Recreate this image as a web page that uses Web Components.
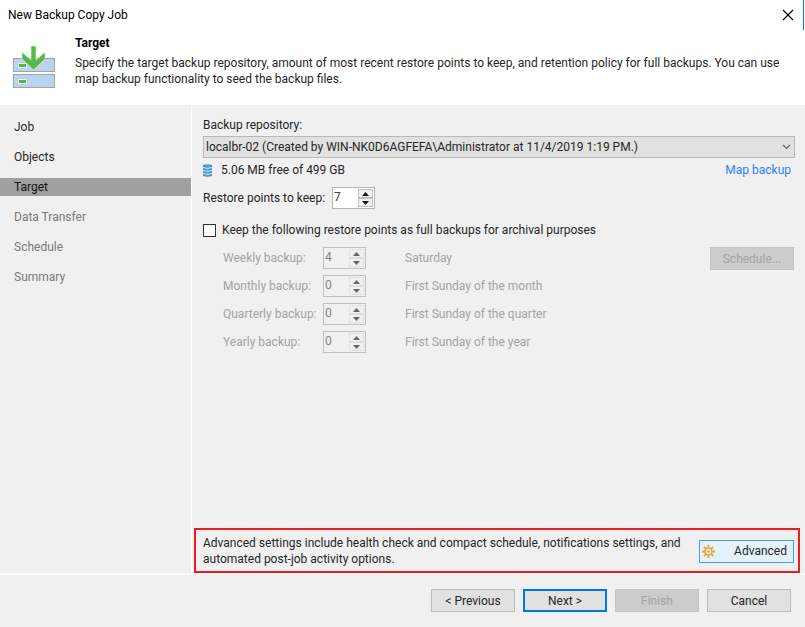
<!DOCTYPE html>
<html lang="en">
<head>
<meta charset="utf-8">
<title>New Backup Copy Job</title>
<style>
  body {
    margin: 0;
    background: #f0f0f0;
    color: #262626;
    font: 12px/16px "Segoe UI", Roboto, "Open Sans", sans-serif;
  }
</style>
</head>
<body>
<wizard-window title="New Backup Copy Job">
  <wizard-header slot="header" heading="Target">Specify the target backup repository, amount of most recent restore points to keep, and retention policy for full backups. You can use map backup functionality to seed the backup files.</wizard-header>

  <wizard-step slot="steps" state="done">Job</wizard-step>
  <wizard-step slot="steps" state="done">Objects</wizard-step>
  <wizard-step slot="steps" state="current">Target</wizard-step>
  <wizard-step slot="steps">Data Transfer</wizard-step>
  <wizard-step slot="steps">Schedule</wizard-step>
  <wizard-step slot="steps">Summary</wizard-step>

  <target-page></target-page>

  <wizard-button slot="footer">&lt; Previous</wizard-button>
  <wizard-button slot="footer" primary>Next &gt;</wizard-button>
  <wizard-button slot="footer" disabled>Finish</wizard-button>
  <wizard-button slot="footer">Cancel</wizard-button>
</wizard-window>

<script>
function makeTemplate (html) {
  const template = document.createElement("template");
  template.innerHTML = html;
  return template;
}

const windowTemplate = makeTemplate(`
  <style>
    :host {
      display: flex;
      flex-direction: column;
      min-height: 100vh;
    }
    .titlebar {
      display: flex;
      align-items: center;
      justify-content: space-between;
      height: 30px;
      padding-left: 8px;
      margin-right: 1px;
      border-right: 1px solid #0078d7;
      color: #000;
    }
    .top {
      background: #fff;
    }
    h1 {
      margin: 0;
      font: inherit;
    }
    .close {
      display: flex;
      margin-right: 3px;
      padding: 6px;
      border: none;
      background: none;
    }
    .middle {
      flex: 1;
      display: flex;
      border-bottom: 2px solid #fafafa;
    }
    nav {
      display: flex;
      flex-direction: column;
      gap: 12px;
      flex: 0 0 191px;
      padding-top: 13px;
      border-right: 1px solid #fff;
    }
    main {
      flex: 1;
      display: flex;
    }
    footer {
      display: flex;
      justify-content: flex-end;
      gap: 8px;
      padding: 14px 14px 15px;
    }
  </style>
  <div class="top">
    <div class="titlebar">
      <h1></h1>
      <button class="close" aria-label="Close">
        <svg width="12" height="12" viewBox="0 0 12 12"><path d="M1 1L11 11M11 1L1 11" stroke="#000" stroke-width="1.2"/></svg>
      </button>
    </div>
    <slot name="header"></slot>
  </div>
  <div class="middle">
    <nav><slot name="steps"></slot></nav>
    <main><slot></slot></main>
  </div>
  <footer><slot name="footer"></slot></footer>
`);

class WizardWindow extends HTMLElement {
  constructor () {
    super();
    this.attachShadow({ mode: "open" });
    this.shadowRoot.appendChild(windowTemplate.content.cloneNode(true));
    this.shadowRoot.querySelector("h1").textContent = this.getAttribute("title");
  }

  connectedCallback () {
    this.shadowRoot
      .querySelector(".close")
      .addEventListener("click", () => this.remove());
  }
}

const headerTemplate = makeTemplate(`
  <style>
    :host {
      display: flex;
      gap: 20px;
      padding: 5px 24px 16px 12px;
    }
    svg {
      flex: none;
      margin-top: 10px;
    }
    h2 {
      margin: 0 0 4px;
      color: #000;
      font: inherit;
      font-weight: bold;
    }
    p {
      margin: 0;
    }
  </style>
  <svg width="43" height="44" viewBox="0 0 43 44">
    <g fill="#bcd3ee" stroke="#a3a3a3">
      <rect x="1.5" y="13.500" width="41" height="13"/>
      <rect x="1.5" y="29.500" width="41" height="13"/>
    </g>
    <path d="M6 18h9v5H6zM6 34h9v5H6z" fill="#e8f4e8"/>
    <path d="M7 19h7v3H7zM7 35h7v3H7z" fill="#54b948"/>
    <path d="M19 1h5v14l9-8v7L21.500 25L10 14V7l9 8z" fill="#54b948" stroke="#e8f4e8" stroke-width=".6"/>
  </svg>
  <div>
    <h2></h2>
    <p><slot></slot></p>
  </div>
`);

class WizardHeader extends HTMLElement {
  constructor () {
    super();
    this.attachShadow({ mode: "open" });
    this.shadowRoot.appendChild(headerTemplate.content.cloneNode(true));
    this.shadowRoot.querySelector("h2").textContent = this.getAttribute("heading");
  }
}

const stepTemplate = makeTemplate(`
  <style>
    :host {
      display: block;
      padding: 0 14px;
      color: #7a7a7a;
      line-height: 18px;
    }
    :host([state="done"]) {
      color: #262626;
    }
    :host([state="current"]) {
      background: #a0a0a0;
      color: #111;
    }
  </style>
  <slot></slot>
`);

class WizardStep extends HTMLElement {
  constructor () {
    super();
    this.attachShadow({ mode: "open" });
    this.shadowRoot.appendChild(stepTemplate.content.cloneNode(true));
  }
}

const buttonTemplate = makeTemplate(`
  <style>
    :host {
      display: block;
      flex: none;
      width: 84px;
    }
    button {
      display: flex;
      align-items: center;
      justify-content: center;
      width: 100%;
      height: 23px;
      padding: 0 6px;
      border: 1px solid #bcbcbc;
      background: #e1e1e1;
      color: inherit;
      font: inherit;
    }
    button:disabled {
      border-color: #c4c4c4;
      background: #cccccc;
      color: #a3a3a3;
    }
    :host([primary]) button {
      border: 2px solid #0078d7;
    }
    :host([hot]) {
      width: 95px;
    }
    :host([hot]) button {
      justify-content: space-between;
      padding: 0 6px 0 2px;
      border-color: #4a9fdf;
      background: #e5f1fb;
    }
  </style>
  <button><slot name="icon"></slot><slot></slot></button>
`);

class WizardButton extends HTMLElement {
  constructor () {
    super();
    this.attachShadow({ mode: "open" });
    this.shadowRoot.appendChild(buttonTemplate.content.cloneNode(true));
    this.shadowRoot.querySelector("button").disabled = this.hasAttribute("disabled");
  }
}

const spinTemplate = makeTemplate(`
  <style>
    :host {
      display: flex;
      align-items: center;
    }
    label {
      width: var(--label-width, 100px);
      white-space: nowrap;
    }
    .box {
      display: flex;
      box-sizing: border-box;
      width: 43px;
      height: 22px;
      border: 1px solid #b4b4b4;
      background: #fff;
    }
    input {
      flex: 1;
      min-width: 0;
      padding: 0 0 2px 1px;
      border: none;
      outline: none;
      background: none;
      color: #444;
      font: inherit;
      appearance: textfield;
    }
    input::-webkit-inner-spin-button {
      display: none;
    }
    .arrows {
      display: flex;
      flex-direction: column;
      width: 15px;
      padding: 1px;
    }
    .arrows button {
      flex: 1;
      display: flex;
      align-items: center;
      justify-content: center;
      padding: 0;
      border: 1px solid #c0c0c0;
      background: #f0f0f0;
      color: #111;
    }
    .hint {
      margin-left: 39px;
    }
    :host([disabled]) {
      color: #a3a3a3;
    }
    :host([disabled]) .box {
      background: #f0f0f0;
      border-color: #c0c0c0;
    }
    :host([disabled]) input {
      color: #838383;
    }
    :host([disabled]) .arrows button {
      border-color: #e0e0e0;
      color: #666;
    }
  </style>
  <label for="value"><slot></slot></label>
  <div class="box">
    <input id="value" type="number" min="0">
    <div class="arrows">
      <button id="up" aria-label="Increase"><svg width="7" height="4"><path d="M0 4L3.500 0L7 4z" fill="currentColor"/></svg></button>
      <button id="down" aria-label="Decrease"><svg width="7" height="4"><path d="M0 0L3.500 4L7 0z" fill="currentColor"/></svg></button>
    </div>
  </div>
  <span class="hint"></span>
`);

class SpinField extends HTMLElement {
  constructor () {
    super();
    this.attachShadow({ mode: "open" });
    this.shadowRoot.appendChild(spinTemplate.content.cloneNode(true));

    this.input = this.shadowRoot.querySelector("input");
    this.input.value = this.getAttribute("value");
    this.shadowRoot.querySelector(".hint").textContent = this.getAttribute("hint") || "";
    this.shadowRoot
      .querySelectorAll("input, button")
      .forEach((el) => { el.disabled = this.hasAttribute("disabled"); });
  }

  connectedCallback () {
    this.shadowRoot
      .querySelector("#up")
      .addEventListener("click", () => this.input.stepUp());
    this.shadowRoot
      .querySelector("#down")
      .addEventListener("click", () => this.input.stepDown());
  }
}

const pageTemplate = makeTemplate(`
  <style>
    :host {
      flex: 1;
      display: flex;
      flex-direction: column;
    }
    .form {
      flex: 1;
      padding: 12px 10px 0 11px;
    }
    .repository {
      display: grid;
      margin-top: 3px;
    }
    .repository > * {
      grid-area: 1 / 1;
    }
    .repository svg {
      place-self: center end;
      margin-right: 4px;
      pointer-events: none;
    }
    select {
      width: 100%;
      height: 22px;
      padding: 0 20px 0 2px;
      border: 1px solid #b9b9b9;
      border-radius: 0;
      background: #e1e1e1;
      color: inherit;
      font: inherit;
      appearance: none;
    }
    .space {
      display: flex;
      align-items: center;
      height: 24px;
      padding-right: 4px;
    }
    .space svg {
      margin-right: 9px;
    }
    .space a {
      margin-left: auto;
      color: #2a7fff;
      text-decoration: none;
    }
    .keep {
      --label-width: 129px;
      margin-top: 5px;
    }
    .archive {
      display: flex;
      align-items: center;
      gap: 6px;
      margin: 13px 0 9px;
    }
    .archive input {
      width: 13px;
      height: 13px;
      margin: 0;
      border: 1px solid #333;
      background: #fff;
      appearance: none;
    }
    .archive input:checked {
      background: #333;
    }
    .schedule {
      display: flex;
      align-items: flex-start;
      padding: 0 1px 0 20px;
    }
    .periods {
      flex: 1;
      display: flex;
      flex-direction: column;
      gap: 6px;
    }
    .advanced {
      display: flex;
      align-items: center;
      justify-content: space-between;
      gap: 12px;
      margin: 0 5px 0 2px;
      padding: 5px 4px 4px 7px;
      border: 2px solid #ed1c24;
    }
    .advanced p {
      margin: 0;
    }
  </style>
  <div class="form">
    <label for="repository">Backup repository:</label>
    <div class="repository">
      <select id="repository">
        <option>localbr-02 (Created by WIN-NK0D6AGFEFA\\Administrator at 11/4/2019 1:19 PM.)</option>
      </select>
      <svg width="9" height="6" viewBox="0 0 9 6" fill="none"><path d="M1 1L4.500 4.500L8 1" stroke="#666" stroke-width="1.200"/></svg>
    </div>
    <div class="space">
      <svg width="9" height="13" viewBox="0 0 9 13">
        <path d="M0 1Q4.500-.5 9 1V3Q4.500 4.500 0 3zM0 4Q4.500 5.500 9 4V6Q4.500 7.500 0 6zM0 7Q4.500 8.500 9 7V9Q4.500 10.500 0 9zM0 10Q4.500 11.500 9 10V12Q4.500 13.500 0 12z" fill="#3a93d0"/>
        <path d="M3 1.500h3M3 5.800h3M3 8.800h3M3 11.800h3" stroke="#7dbbe6" stroke-width=".7"/>
      </svg>
      <span>5.06 MB free of 499 GB</span>
      <a href="#">Map backup</a>
    </div>
    <spin-field class="keep" value="7">Restore points to keep:</spin-field>
    <div class="archive">
      <input id="archive" type="checkbox">
      <label for="archive">Keep the following restore points as full backups for archival purposes</label>
    </div>
    <div class="schedule">
      <div class="periods">
        <spin-field disabled value="4" hint="Saturday">Weekly backup:</spin-field>
        <spin-field disabled value="0" hint="First Sunday of the month">Monthly backup:</spin-field>
        <spin-field disabled value="0" hint="First Sunday of the quarter">Quarterly backup:</spin-field>
        <spin-field disabled value="0" hint="First Sunday of the year">Yearly backup:</spin-field>
      </div>
      <wizard-button disabled>Schedule...</wizard-button>
    </div>
  </div>
  <div class="advanced">
    <p>Advanced settings include health check and compact schedule, notifications settings, and automated post-job activity options.</p>
    <wizard-button hot>
      <svg slot="icon" width="13" height="13" viewBox="0 0 13 13" fill="none" stroke="#e9a83a">
        <circle cx="6.500" cy="6.500" r="3.500" stroke-width="1.700"/>
        <circle cx="6.500" cy="6.500" r="1.300" fill="#e9a83a" stroke="none"/>
        <path d="M6.500 0v2.500M6.500 10.500V13M0 6.500h2.500M10.500 6.500H13M1.900 1.900l1.800 1.800M9.300 9.300l1.800 1.800M1.900 11.100l1.800-1.800M9.300 3.700l1.800-1.800" stroke-width="2"/>
      </svg>
      Advanced
    </wizard-button>
  </div>
`);

class TargetPage extends HTMLElement {
  constructor () {
    super();
    this.attachShadow({ mode: "open" });
    this.shadowRoot.appendChild(pageTemplate.content.cloneNode(true));
  }
}

window.customElements.define("wizard-button", WizardButton);
window.customElements.define("spin-field", SpinField);
window.customElements.define("wizard-step", WizardStep);
window.customElements.define("wizard-header", WizardHeader);
window.customElements.define("target-page", TargetPage);
window.customElements.define("wizard-window", WizardWindow);
</script>
</body>
</html>
